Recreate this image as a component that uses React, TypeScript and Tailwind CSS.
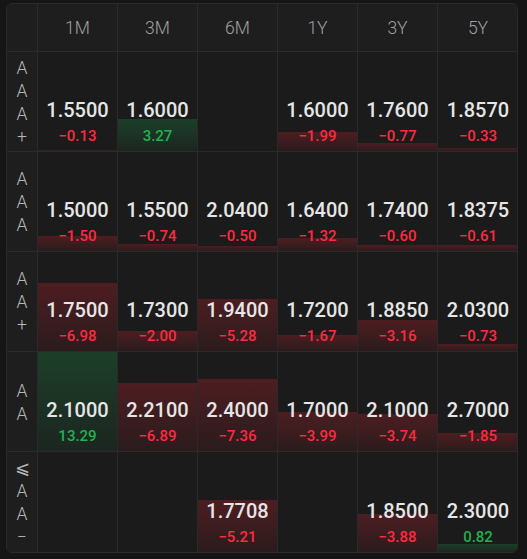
import React from 'react';

type Cell = { value: string; change: number } | null;

const COLUMNS = ['1M', '3M', '6M', '1Y', '3Y', '5Y'];

const ROWS: { label: string[]; cells: Cell[] }[] = [
  {
    label: ['A', 'A', 'A', '+'],
    cells: [
      { value: '1.5500', change: -0.13 },
      { value: '1.6000', change: 3.27 },
      null,
      { value: '1.6000', change: -1.99 },
      { value: '1.7600', change: -0.77 },
      { value: '1.8570', change: -0.33 },
    ],
  },
  {
    label: ['A', 'A', 'A'],
    cells: [
      { value: '1.5000', change: -1.5 },
      { value: '1.5500', change: -0.74 },
      { value: '2.0400', change: -0.5 },
      { value: '1.6400', change: -1.32 },
      { value: '1.7400', change: -0.6 },
      { value: '1.8375', change: -0.61 },
    ],
  },
  {
    label: ['A', 'A', '+'],
    cells: [
      { value: '1.7500', change: -6.98 },
      { value: '1.7300', change: -2.0 },
      { value: '1.9400', change: -5.28 },
      { value: '1.7200', change: -1.67 },
      { value: '1.8850', change: -3.16 },
      { value: '2.0300', change: -0.73 },
    ],
  },
  {
    label: ['A', 'A'],
    cells: [
      { value: '2.1000', change: 13.29 },
      { value: '2.2100', change: -6.89 },
      { value: '2.4000', change: -7.36 },
      { value: '1.7000', change: -3.99 },
      { value: '2.1000', change: -3.74 },
      { value: '2.7000', change: -1.85 },
    ],
  },
  {
    label: ['⩽', 'A', 'A', '−'],
    cells: [
      null,
      null,
      { value: '1.7708', change: -5.21 },
      null,
      { value: '1.8500', change: -3.88 },
      { value: '2.3000', change: 0.82 },
    ],
  },
];

const formatChange = (n: number) =>
  n < 0 ? `−${Math.abs(n).toFixed(2)}` : n.toFixed(2);

const DataCell: React.FC<{ cell: Cell; last: boolean }> = ({ cell, last }) => {
  const border = last ? '' : 'border-r border-[#2a2a2a]';
  if (!cell) return <div className={`relative h-full ${border}`} />;
  const up = cell.change >= 0;
  const barHeight = Math.max(1, Math.min(100, Math.abs(cell.change) * 9.9));
  return (
    <div className={`relative h-full ${border}`}>
      {/* change bar */}
      <div
        className={`absolute inset-x-0 bottom-0 ${
          up
            ? 'bg-gradient-to-b from-[#1c3f29] to-[#1b2620]'
            : 'bg-gradient-to-b from-[#4d1d21] to-[#2b1b1d]'
        }`}
        style={{ height: `${barHeight}%` }}
      />
      <div className="relative flex h-full flex-col items-center justify-end pb-[5px]">
        <div className="mb-[3px] text-[20px] leading-[25px] font-medium text-[#e6e6e6]">
          {cell.value}
        </div>
        <div
          className={`text-[15px] leading-[20px] font-medium ${
            up ? 'text-[#1fb24f]' : 'text-[#ff2b3e]'
          }`}
        >
          {formatChange(cell.change)}
        </div>
      </div>
    </div>
  );
};

export default function App() {
  return (
    <div
      className="min-h-[559px] bg-[#151515] pt-[3px] pl-[6px]"
      style={{ fontFamily: 'Roboto, "Noto Sans", "DejaVu Sans", sans-serif' }}
    >
      <div className="w-[512px] overflow-hidden rounded-[6px] border border-[#2a2a2a] bg-[#1b1b1b]">
        {/* Header */}
        <div className="grid h-[48px] grid-cols-[31px_repeat(6,80px)] border-b border-[#2a2a2a] bg-[#1e1e1e]">
          <div className="border-r border-[#2a2a2a]" />
          {COLUMNS.map((c, i) => (
            <div
              key={c}
              className={`flex items-center justify-center pt-[2px] text-[17.5px] font-light text-[#a0a0a0] ${
                i < COLUMNS.length - 1 ? 'border-r border-[#2a2a2a]' : ''
              }`}
            >
              {c}
            </div>
          ))}
        </div>

        {/* Rows */}
        {ROWS.map((row, ri) => (
          <div
            key={ri}
            className={`grid h-[100px] grid-cols-[31px_repeat(6,80px)] ${
              ri < ROWS.length - 1 ? 'border-b border-[#2a2a2a]' : ''
            }`}
          >
            <div className="flex flex-col items-center justify-center border-r border-[#2a2a2a] bg-[#1e1e1e] pt-[2px]">
              {row.label.map((l, li) => (
                <span key={li} className="text-[17.5px] leading-[23px] font-light text-[#b8b8b8]">
                  {l}
                </span>
              ))}
            </div>
            {row.cells.map((cell, ci) => (
              <DataCell key={ci} cell={cell} last={ci === row.cells.length - 1} />
            ))}
          </div>
        ))}
      </div>
    </div>
  );
}
